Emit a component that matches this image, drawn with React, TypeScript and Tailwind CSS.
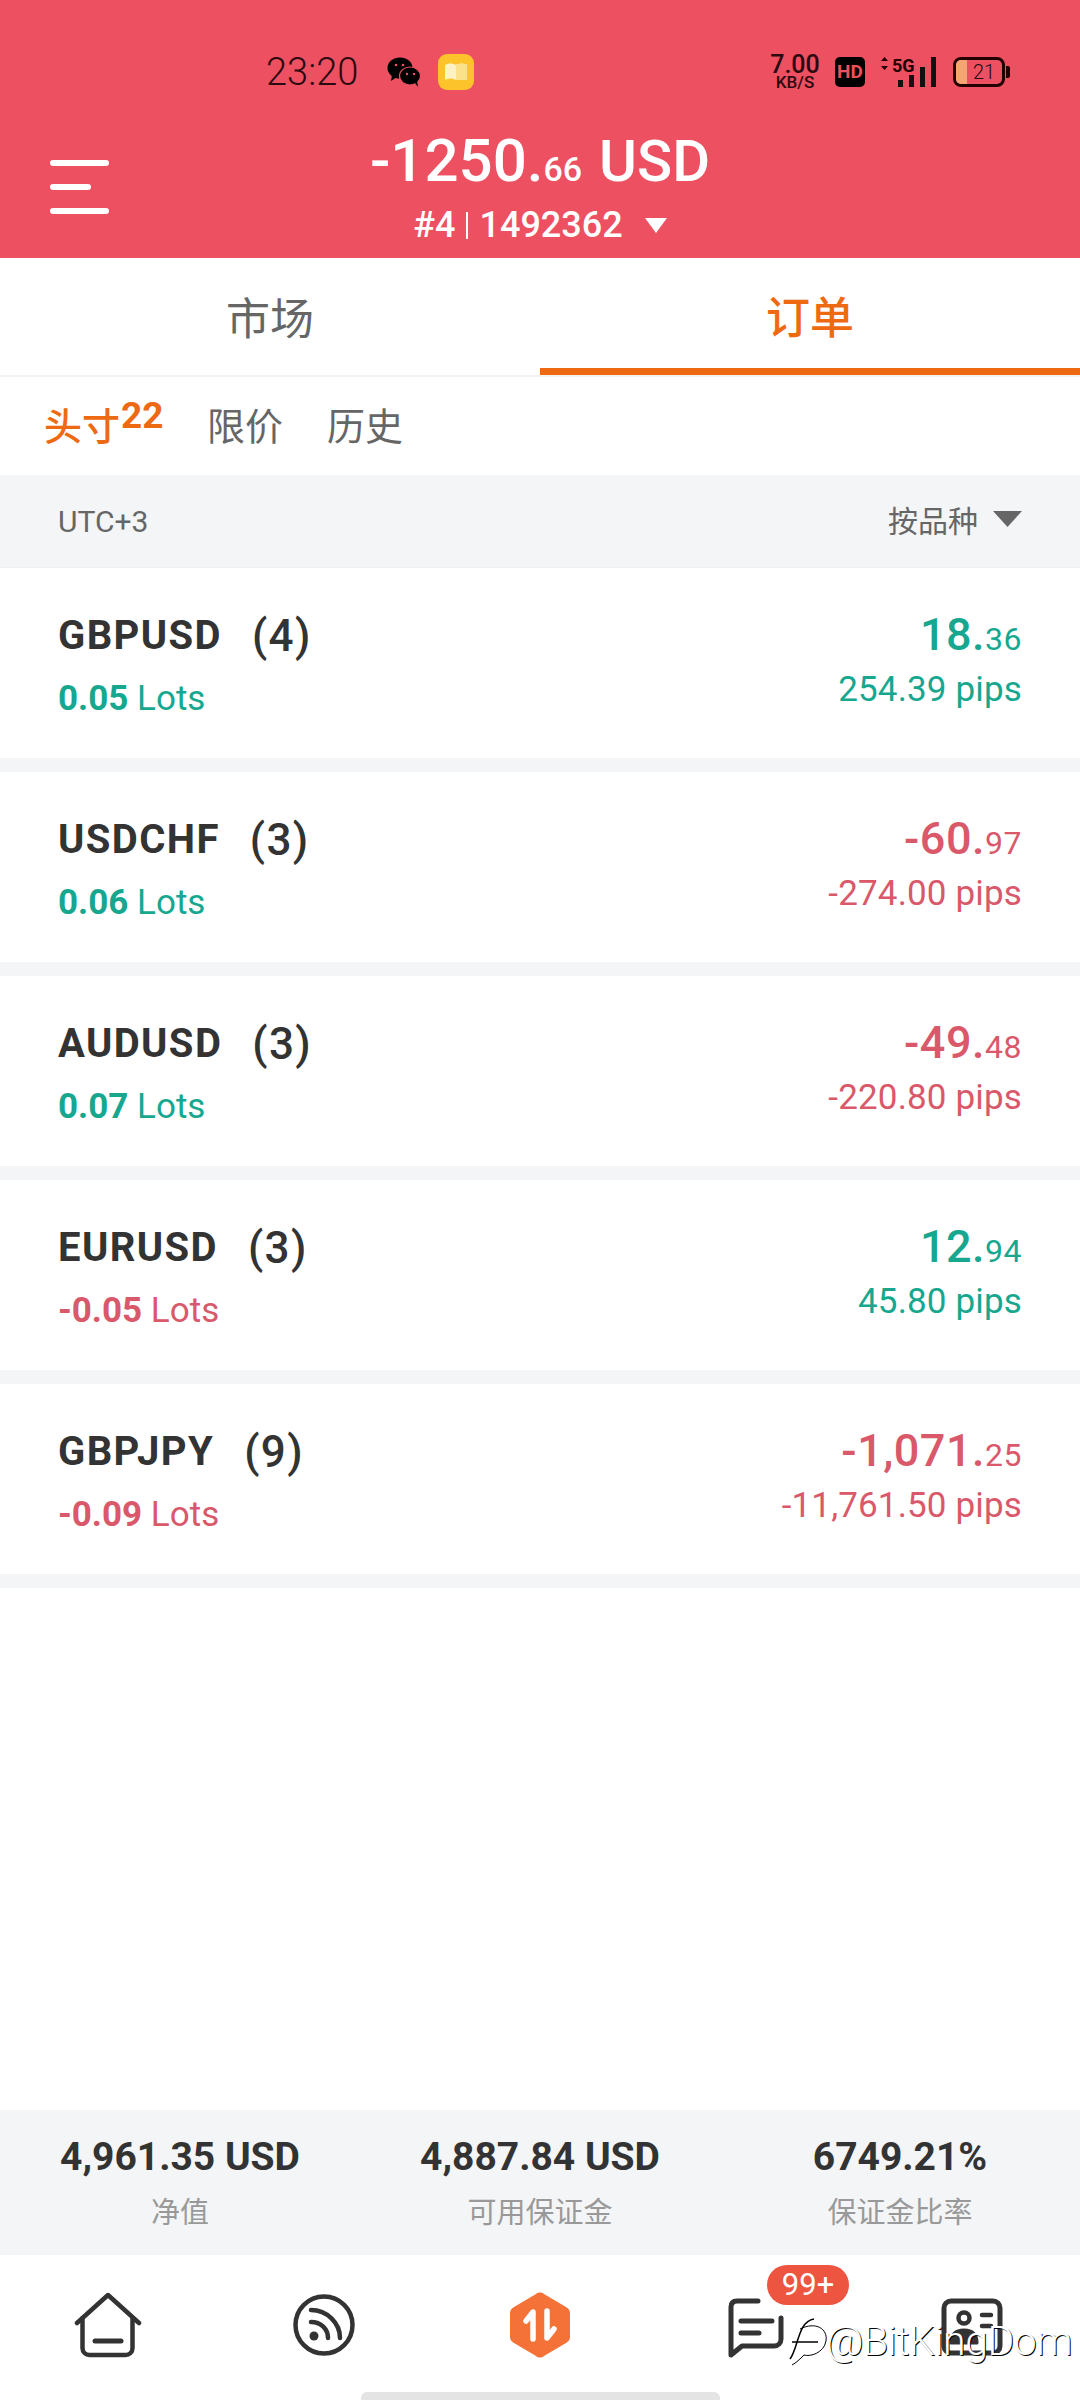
const rows = [
  { name: "GBPUSD", count: "(4)", lots: "0.05", up: true, big: "18.", small: "36", pips: "254.39" },
  { name: "USDCHF", count: "(3)", lots: "0.06", up: false, big: "-60.", small: "97", pips: "-274.00" },
  { name: "AUDUSD", count: "(3)", lots: "0.07", up: false, big: "-49.", small: "48", pips: "-220.80" },
  { name: "EURUSD", count: "(3)", lots: "-0.05", up: true, big: "12.", small: "94", pips: "45.80" },
  { name: "GBPJPY", count: "(9)", lots: "-0.09", up: false, big: "-1,071.", small: "25", pips: "-11,761.50" },
];

function StatusBar() {
  return (
    <div className="flex items-center justify-between h-[116px] pt-[28px] pl-[266px] pr-[70px] text-[#2a0a10]">
      <div className="flex items-center">
        <span className="text-[38px] leading-none w-[121px] font-light">23:20</span>
        <svg width="34" height="30" viewBox="0 0 34 30" fill="#000">
          <ellipse cx="13" cy="11" rx="12.5" ry="10.5" />
          <path d="M5 18l-1 6 6-4z" />
          <ellipse cx="23" cy="19" rx="10.5" ry="9" stroke="#ed5060" strokeWidth="1.2" />
          <path d="M28 26l3 4-1-6z" />
          <circle cx="9" cy="8" r="1.3" fill="#ed5060" /><circle cx="16" cy="8" r="1.3" fill="#ed5060" />
          <circle cx="20" cy="17" r="1.2" fill="#ed5060" /><circle cx="27" cy="17" r="1.2" fill="#ed5060" />
        </svg>
        <svg className="ml-[17px]" width="36" height="36" viewBox="0 0 36 36">
          <rect width="36" height="36" rx="9" fill="#fdc32b" />
          <path d="M7 11c4-2 7-2 11 0 4-2 7-2 11 0v15c-4-2-7-2-11 0-4-2-7-2-11 0z" fill="#fdf2c4" />
          <rect x="18" y="10" width="11" height="16" fill="#fbe28a" />
        </svg>
      </div>
      <div className="flex items-center">
        <div className="flex flex-col items-center w-[50px] text-[#2a0a10] font-medium">
          <span className="text-[25px] leading-[21px]">7.00</span>
          <span className="text-[17px] leading-[15px]">KB/S</span>
        </div>
        <span className="ml-[15px] w-[30px] h-[30px] rounded-[5px] bg-black text-[#ed5060] text-[19px] font-bold leading-[30px] text-center">HD</span>
        <svg className="ml-[15px] overflow-visible" width="56" height="30" viewBox="0 0 56 30">
          <path d="M4.500 0L8 4H1zM4.500 13L8 9H1z" fill="#200" />
          <text x="12" y="15" fontSize="18" fontWeight="700" fill="#200" fontFamily="Roboto">5G</text>
          <rect x="18" y="23" width="5" height="7" fill="#111" />
          <rect x="29" y="18" width="5" height="12" fill="#111" />
          <rect x="40" y="10" width="5" height="20" fill="#111" />
          <rect x="51" y="0" width="5" height="30" fill="#111" />
        </svg>
        <div className="ml-[17px] relative w-[52px] h-[30px] rounded-[8px] border-[3px] border-[#200] overflow-hidden flex items-center justify-center">
          <div className="absolute left-0 top-0 bottom-0 w-[11px] bg-[#f4a572]" />
          <span className="relative text-[20px] font-light pl-[10px] leading-none">21</span>
        </div>
        <div className="w-[4px] h-[12px] ml-[1px] bg-[#200] rounded-r-[2px]" />
      </div>
    </div>
  );
}

function Header() {
  return (
    <div className="bg-[#ed5060] h-[258px] text-white">
      <StatusBar />
      <div className="relative flex flex-col items-center pt-[15px]">
        <div className="absolute left-[50px] top-[44px] flex flex-col gap-[18px]">
          <div className="w-[59px] h-[6px] rounded-full bg-white" />
          <div className="w-[41px] h-[6px] rounded-full bg-white" />
          <div className="w-[59px] h-[6px] rounded-full bg-white" />
        </div>
        <div className="leading-none h-[66px] flex items-baseline font-medium">
          <span className="text-[60px]">-1250.</span>
          <span className="text-[34px]">66</span>
          <span className="text-[58px] ml-[17px]">USD</span>
        </div>
        <div className="flex items-center mt-[12px] h-[32px] text-[36px] leading-none font-medium">
          <span>#4</span>
          <span className="w-[2px] h-[27px] bg-white mx-[11px]" />
          <span>1492362</span>
          <svg className="ml-[22px]" width="22" height="15" viewBox="0 0 22 15"><path d="M0 0h22L11 15z" fill="#fff" /></svg>
        </div>
      </div>
    </div>
  );
}

function Tabs() {
  return (
    <div className="flex h-[119px] border-b-[2px] border-[#f2f2f4]">
      <div className="flex-1 flex items-center justify-center text-[44px] text-[#666] pt-[6px]">市场</div>
      <div className="flex-1 flex items-center justify-center text-[44px] text-[#ee6a12] font-medium border-b-[7px] border-[#ee6a12] pt-[12px]">订单</div>
    </div>
  );
}

function SubTabs() {
  return (
    <div className="flex items-center h-[98px] pl-[44px] pt-[2px] text-[38px] text-[#666]">
      <span className="text-[#ee6a12] font-medium flex items-start relative">
        头寸
        <sup className="absolute left-[77px] top-[-2px] text-[37px] leading-none font-bold">22</sup>
      </span>
      <span className="ml-[87px]">限价</span>
      <span className="ml-[44px]">历史</span>
    </div>
  );
}

function Toolbar() {
  return (
    <div className="flex items-center justify-between h-[93px] bg-[#f4f5f7] px-[58px] text-[30px] text-[#666] border-b border-[#eeeff1]">
      <span>UTC+3</span>
      <div className="flex items-center">
        <span>按品种</span>
        <svg className="ml-[15px] mb-[4px]" width="29" height="16" viewBox="0 0 29 16"><path d="M0 0h29L14.500 16z" fill="#666" /></svg>
      </div>
    </div>
  );
}

function Row({ r }: { r: (typeof rows)[number] }) {
  const pnl = r.up ? "text-[#17a78f]" : "text-[#d9586a]";
  const lot = r.lots.startsWith("-") ? "text-[#d9586a]" : "text-[#17a78f]";
  return (
    <div className="flex items-center justify-between h-[204px] px-[58px] pb-[14px] border-b-[14px] border-[#f4f5f7] box-border">
      <div className="flex flex-col pt-[19px]">
        <div className="flex items-center h-[42px] text-[40px] leading-none font-bold tracking-[1.4px] text-[#333]">
          <span>{r.name}</span><span className="font-medium text-[44px] ml-[30px]">{r.count}</span>
        </div>
        <div className={`mt-[24px] text-[35px] leading-none ${lot}`}>
          <span className="font-bold">{r.lots}</span> Lots
        </div>
      </div>
      <div className={`flex flex-col items-end pt-[6px] ${pnl}`}>
        <div className="flex items-baseline leading-none h-[44px] font-medium tracking-[0.5px]">
          <span className="text-[45px]">{r.big}</span>
          <span className="text-[32px] font-normal">{r.small}</span>
        </div>
        <div className="mt-[16px] text-[35px] leading-none tracking-[0.15px]">{r.pips} pips</div>
      </div>
    </div>
  );
}

function Stat({ v, l }: { v: string; l: string }) {
  return (
    <div className="flex flex-col items-center">
      <span className="text-[39px] leading-none font-bold text-[#333]">{v}</span>
      <span className="mt-[22px] text-[29px] leading-none text-[#999]">{l}</span>
    </div>
  );
}

function Nav() {
  return (
    <div className="relative grid grid-cols-5 h-[145px] pt-[37px] bg-white">
      <div className="flex justify-center items-start">
        <svg width="68" height="66" viewBox="0 0 68 66" fill="none" stroke="#333" strokeWidth="4.500" strokeLinecap="round" strokeLinejoin="round">
          <path d="M3 31L34 3l31 28" />
          <path d="M8.500 26v30c0 4 3 7 7 7h36c4 0 7-3 7-7V26" />
          <path d="M21 49h26" strokeWidth="5" />
        </svg>
      </div>
      <div className="flex justify-center items-start">
        <svg className="mt-[2px]" width="62" height="62" viewBox="0 0 62 62" fill="none" stroke="#333" strokeWidth="4.500" strokeLinecap="round">
          <circle cx="31" cy="31" r="28.500" />
          <path d="M18 16c16 0 29 13 29 28" />
          <path d="M18 28c10 0 17 7 17 16" />
          <circle cx="21" cy="42" r="4.500" fill="#333" stroke="none" />
        </svg>
      </div>
      <div className="flex justify-center items-start">
        <svg width="60" height="66" viewBox="0 0 60 66">
          <path d="M26 2c2-2 6-2 8 0l22 13c2 1 4 3 4 6v24c0 3-2 5-4 6L34 64c-2 2-6 2-8 0L4 51c-2-1-4-3-4-6V21c0-3 2-5 4-6z" fill="#f47238" />
          <path d="M23 47V20l-7 9" fill="none" stroke="#fff" strokeWidth="5.500" strokeLinecap="round" strokeLinejoin="round" />
          <path d="M37 19v27l7-9" fill="none" stroke="#fff" strokeWidth="5.500" strokeLinecap="round" strokeLinejoin="round" />
        </svg>
      </div>
      <div className="flex justify-center items-start">
        <svg className="mt-[6px]" width="56" height="60" viewBox="0 0 56 60" fill="none" stroke="#333" strokeLinecap="round" strokeLinejoin="round">
          <path d="M30 3H9C5 3 3 5 3 9v48l11-9h32c4 0 7-3 7-7V20" strokeWidth="5" />
          <path d="M13 23h31M13 35h18" strokeWidth="5" />
        </svg>
      </div>
      <div className="flex justify-center items-start">
        <svg className="mt-[6px]" width="62" height="58" viewBox="0 0 62 58" fill="none" stroke="#333" strokeLinecap="round" strokeLinejoin="round">
          <rect x="3" y="3" width="56" height="52" rx="7" strokeWidth="5" />
          <circle cx="23" cy="20" r="5.500" strokeWidth="4.500" />
          <path d="M10 45c0-10 6-13 13-13s13 3 13 13z" fill="#333" strokeWidth="3" />
          <path d="M41 17h9M41 28h9" strokeWidth="4.500" />
        </svg>
      </div>
      <div className="absolute left-[767px] top-[10px] w-[82px] h-[40px] rounded-full bg-[#ee5540] text-white text-[31px] leading-[40px] text-center">99+</div>
      <div className="absolute left-[786px] top-[60px] flex items-center text-white font-light text-[41px] leading-none tracking-[-0.5px] [text-shadow:1px_1px_0_#000]">
        <svg className="mr-[-4px]" width="44" height="52" viewBox="0 0 44 52" fill="none">
          <path d="M4 44C12 34 12 6 28 4" stroke="#000" strokeWidth="1.500" />
          <path d="M6 27h26" stroke="#000" strokeWidth="1.500" />
          <path d="M14 14C30 6 42 14 40 26c-2 12-16 16-22 14-4 4-8 8-12 10" stroke="#000" strokeWidth="1" />
        </svg>
        <span>@BitKingDom</span>
      </div>
      <div className="absolute left-[361px] bottom-0 w-[359px] h-[8px] rounded-t-[6px] bg-[#e4e4e4]" />
    </div>
  );
}

export default function App() {
  return (
    <div className="w-[1080px] h-[2400px] flex flex-col bg-white overflow-hidden [font-family:Roboto,'Noto_Sans_CJK_SC',sans-serif]">
      <Header />
      <Tabs />
      <SubTabs />
      <Toolbar />
      <div className="flex-1">
        {rows.map((r) => <Row key={r.name} r={r} />)}
      </div>
      <div className="grid grid-cols-3 items-center h-[145px] bg-[#f4f5f7]">
        <Stat v="4,961.35 USD" l="净值" />
        <Stat v="4,887.84 USD" l="可用保证金" />
        <Stat v="6749.21%" l="保证金比率" />
      </div>
      <Nav />
    </div>
  );
}
